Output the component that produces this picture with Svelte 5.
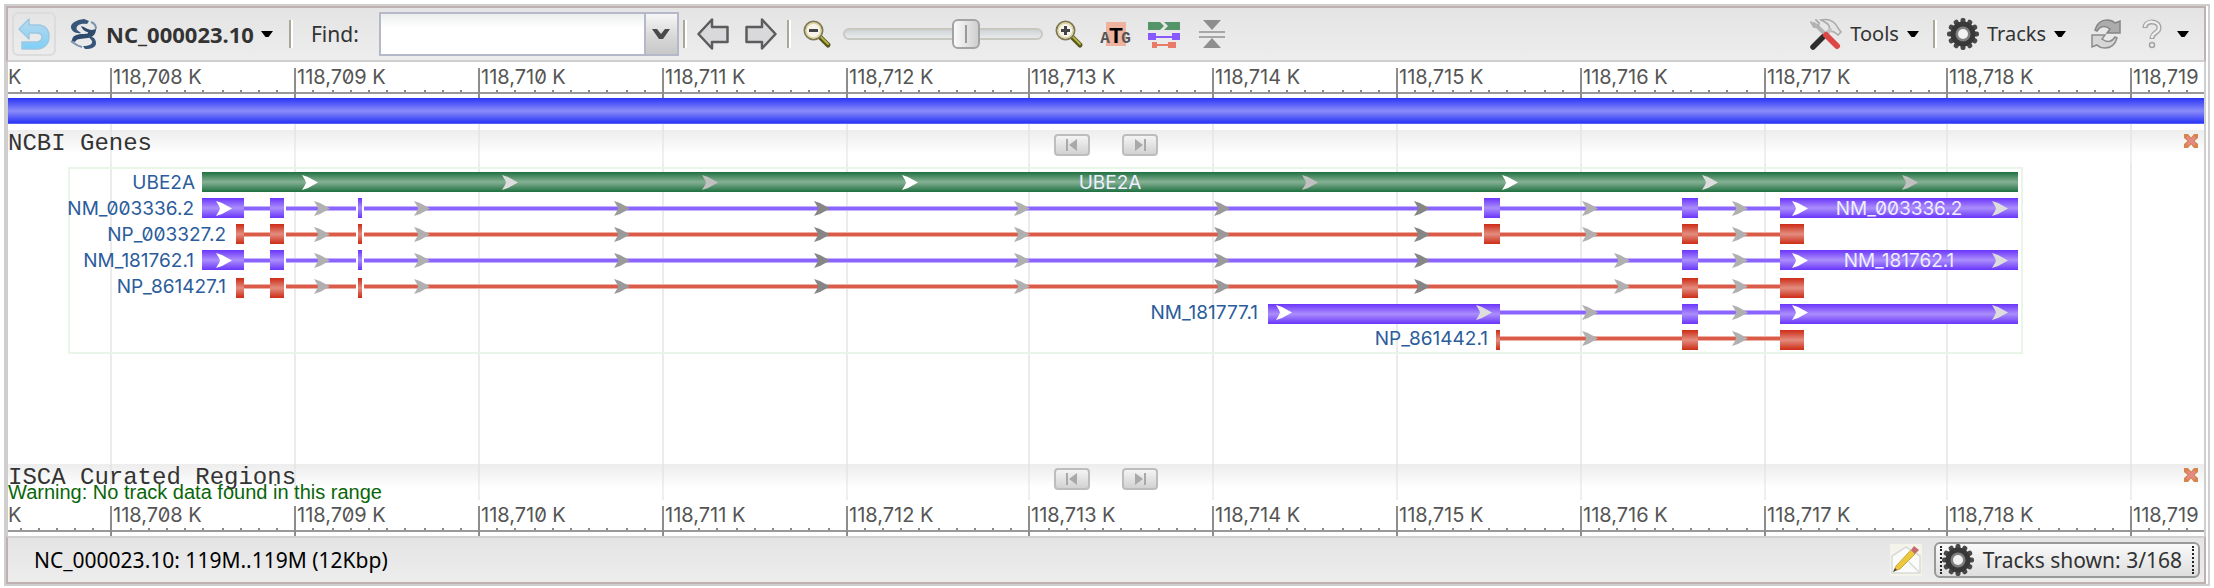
<script>
  let width = $state(2196);
  const k = $derived(width / 2196);

  const ticks = [102, 286, 470, 654, 838, 1020, 1204, 1388, 1572, 1756, 1938, 2122];
  const names = ticks.map((_, i) => (i === 11 ? '118,719' : `118,${708 + i} K`));
  const minor = [];
  for (let i = -1; i < 12; i++) {
    for (let j = 1; j < 10; j++) {
      const x = Math.round((103 + i * 183.6 + j * 18.36) / 2) * 2;
      if (x > 4 && x < 2196) minor.push(x);
    }
  }

  const W = '#ffffff', L = '#dddddd', M = '#c0c0c0';
  const G1 = '#b0b0b0', G2 = '#9a9a9a', G3 = '#868686';
  const common = [[306, G1], [406, G1], [606, G2], [806, G3], [1006, G1], [1206, G2], [1406, G3]];
  const longArrows = [...common, [1574, G1], [1724, G1]];
  const skipArrows = [...common, [1606, G1], [1724, G1]];
  const ends = [[208, W], [1784, W], [1984, L]];

  // Row pitch is 26; exon boxes of the lower rows sit slightly below their line.
  const rows = [
    { drop: 0, kind: 'gene', name: 'UBE2A', inner: 1102, at: 187, exons: [[194, 2010]], introns: [],
      arrows: [[294, W], [494, L], [694, M], [894, W], [1294, M], [1494, W], [1694, L], [1894, M]] },
    { drop: 0, kind: 'rna', name: 'NM_003336.2', inner: 1891, at: 186,
      exons: [[194, 236], [262, 276], [350, 354], [1476, 1492], [1674, 1690], [1772, 2010]],
      introns: [[236, 262], [278, 348], [356, 1474], [1492, 1674], [1690, 1772]], arrows: [...longArrows, ...ends] },
    { drop: 0, kind: 'cds', name: 'NP_003327.2', at: 218,
      exons: [[228, 236], [262, 276], [350, 354], [1476, 1492], [1674, 1690], [1772, 1796]],
      introns: [[236, 262], [278, 348], [356, 1474], [1492, 1674], [1690, 1772]], arrows: longArrows },
    { drop: 0, kind: 'rna', name: 'NM_181762.1', inner: 1891, at: 186,
      exons: [[194, 236], [262, 276], [350, 354], [1674, 1690], [1772, 2010]],
      introns: [[236, 262], [278, 348], [356, 1674], [1690, 1772]], arrows: [...skipArrows, ...ends] },
    { drop: 2, kind: 'cds', name: 'NP_861427.1', at: 218,
      exons: [[228, 236], [262, 276], [350, 354], [1674, 1690], [1772, 1796]],
      introns: [[236, 262], [278, 348], [356, 1674], [1690, 1772]], arrows: skipArrows },
    { drop: 2, kind: 'rna', name: 'NM_181777.1', at: 1250,
      exons: [[1260, 1492], [1674, 1690], [1772, 2010]],
      introns: [[1492, 1674], [1690, 1772]],
      arrows: [[1268, W], [1468, L], [1574, G1], [1724, G1], [1784, W], [1984, L]] },
    { drop: 2, kind: 'cds', name: 'NP_861442.1', at: 1480,
      exons: [[1488, 1492], [1674, 1690], [1772, 1796]],
      introns: [[1492, 1674], [1690, 1772]], arrows: [[1574, G1], [1724, G1]] }
  ];

  let query = $state('');
  let zoom = $state(64);
</script>

{#snippet ruler()}
  <svg class="ruler" aria-hidden="true">
    <text x="0" y="22">K</text>
    <rect x="0" y="30" width="100%" height="2" fill="#999" />
    {#each minor as x}<rect x={x * k} y="28" width="2" height="2" fill="#888" />{/each}
    {#each ticks as x, i}
      <rect x={x * k} y="6" width="2" height="30" fill="#8c8c8c" />
      <text x={x * k + 3} y="22">{names[i]}</text>
    {/each}
  </svg>
{/snippet}

{#snippet gear()}
  <svg class="icon" width="32" height="32" viewBox="0 0 32 32">
    <g fill="#484848">
      {#each [0, 30, 60, 90, 120, 150] as a}
        <rect x="13.500" y="0" width="5" height="32" rx="2" transform="rotate({a} 16 16)" />
      {/each}
    </g>
    <circle cx="16" cy="16" r="12.500" fill="#383838" />
    <circle cx="16" cy="16" r="7.500" fill="#808080" />
    <circle cx="16" cy="16" r="5" fill="#f2f2f2" />
  </svg>
{/snippet}

{#snippet caret()}
  <svg width="12" height="8" viewBox="0 0 12 8"><path d="M0 1H12L7.500 7H4.500Z" fill="#000" /></svg>
{/snippet}

{#snippet trackHead(title)}
  <div class="head">
    <h2>{title}</h2>
    <div class="nav">
      <button aria-label="Previous feature">
        <svg width="32" height="18" viewBox="0 0 32 18"><path d="M10 3h2v12h-2zM21 3v12l-8-6z" fill="#a9a9a9" /></svg>
      </button>
      <button aria-label="Next feature">
        <svg width="32" height="18" viewBox="0 0 32 18"><path d="M20 3h2v12h-2zM11 3v12l8-6z" fill="#a9a9a9" /></svg>
      </button>
    </div>
    <button class="close" aria-label="Close track">
      <svg width="14" height="14" viewBox="0 0 14 14"><path d="M0 0H4L7 3.500L10 0H14V4L10.500 7L14 10V14H10L7 10.500L4 14H0V10L3.500 7L0 4Z" fill="#d5844c" /><path d="M3 3L11 11M11 3L3 11" stroke="#e58a88" stroke-width="2.500" /></svg>
    </button>
  </div>
{/snippet}

{#snippet lens(plus)}
  <svg width="30" height="30" viewBox="0 0 30 30">
    <path d="M18 18L26 26" stroke="#55551c" stroke-width="5" stroke-linecap="round" />
    <path d="M19 18L26 25" stroke="#b5b240" stroke-width="2" stroke-linecap="round" />
    <circle cx="11.500" cy="11.500" r="9" fill="#f6f3ea" stroke="#7d7658" stroke-width="2" />
    <circle cx="11.500" cy="11.500" r="7.500" fill="none" stroke="#dcd49c" stroke-width="1.500" />
    <path d={plus ? 'M7 11.500h9M11.500 7v9' : 'M7 11.500h9'} stroke="#444" stroke-width="3" />
  </svg>
{/snippet}

<div class="viewer">
  <div class="toolbar">
    <button class="undo" aria-label="Back">
      <svg width="32" height="32" viewBox="0 0 32 32">
        <defs><linearGradient id="back" x1="0" y1="0" x2="0" y2="1"><stop offset="0" stop-color="#b9d9ee" /><stop offset="1" stop-color="#7fd0f8" /></linearGradient></defs>
        <path d="M1 11L11 1V7H20C27 7 31 12 31 18.500C31 26 26 31 19 31H4V24H18C21.500 24 24 22 24 18.500C24 16 21.500 15 18 15H11V21Z" fill="url(#back)" stroke="#9cc7e2" stroke-width="1.500" stroke-linejoin="round" />
      </svg>
    </button>
    <button class="seq">
      <svg width="32" height="32" viewBox="0 0 32 32">
        <path d="M17 1L22 3L20 6C13 5 8 8 10 12L14 15C9 16 4 13 4 9C4 5 9 2 17 1Z" fill="#36577a" />
        <path d="M14 8C18 9 21 12 25 12L29 11C29 15 27 19 21 20C15 21 10 20 8 24L5 23C5 18 9 16 16 16C20 16 23 15 20 14C17 13 15 11 14 8Z" fill="#2c4a6c" />
        <path d="M21 18C26 18 29 21 29 25C29 29 25 31 18 31L16 28C22 28 26 26 25 23Z" fill="#36577a" />
        <path d="M4 23C8 26 10 28 15 29M24 4C27 5 29 8 29 11" fill="none" stroke="#7d93aa" stroke-width="2" />
      </svg>
      <b>NC_000023.10</b>{@render caret()}
    </button>
    <i class="sep"></i>
    <label class="find" for="find">Find:</label>
    <div class="combo">
      <input id="find" type="text" bind:value={query} />
      <button aria-label="Show searches">
        <svg width="18" height="12" viewBox="0 0 18 12"><path d="M0 1H5L9 6L13 1H18L11 11H7Z" fill="#4a4a4a" /></svg>
      </button>
    </div>
    <i class="sep"></i>
    <div class="group arrows">
      {#each [1, -1] as d}
        <button aria-label={d > 0 ? 'Pan left' : 'Pan right'}>
          <svg width="32" height="32" viewBox="0 0 32 32"><path transform={d > 0 ? '' : 'translate(32 0) scale(-1 1)'} d="M1.500 16L15 1.500V9H30.500V24H15V30.500Z" fill="#d9d8db" stroke="#5c5c5e" stroke-width="2.500" stroke-linejoin="round" /></svg>
        </button>
      {/each}
    </div>
    <i class="sep"></i>
    <div class="group zoomer">
      <button aria-label="Zoom out">{@render lens(false)}</button>
      <input type="range" min="0" max="100" aria-label="Zoom" bind:value={zoom} />
      <button aria-label="Zoom in">{@render lens(true)}</button>
    </div>
    <div class="group views">
      <button aria-label="Zoom to sequence">
        <svg width="32" height="32" viewBox="0 0 32 32">
          <rect x="6" y="4" width="20" height="24" fill="#eeb29e" />
          <g class="atg"><text x="5" y="25">A</text><text x="26" y="25">G</text><text class="t" x="16" y="25">T</text></g>
        </svg>
      </button>
      <button aria-label="Gene models">
        <svg width="32" height="32" viewBox="0 0 32 32">
          <path d="M0 4H12L16 8L12 12H0ZM16 4H32V12H16L20 8Z" fill="#559468" />
          <path d="M0 15H8V22H0ZM24 15H32V22H24ZM8 18H24V20H8Z" fill="#8757ff" />
          <path d="M4 24H9V30H4ZM20 24H28V30H20ZM9 26H20V28H9Z" fill="#ea7b66" />
        </svg>
      </button>
      <button aria-label="Collapse">
        <svg width="32" height="32" viewBox="0 0 32 32"><path d="M7 2H25L16 12ZM7 30H25L16 20Z" fill="#8e8e8e" /><path d="M3 13H29V15H3ZM3 18H29V20H3Z" fill="#a6a6a6" /></svg>
      </button>
    </div>
    <div class="right">
      <button class="menu">
        <svg width="32" height="32" viewBox="0 0 32 32" stroke-linecap="round" fill="none">
          <path d="M4 6L8 9L17 18" stroke="#b4b4b4" stroke-width="4" />
          <path d="M1 4L4 9L8 9L9 5L6 2" stroke="#b0b0b0" stroke-width="2" />
          <path d="M11 2C20 0 25 4 28 10L31 14L28 17L24 14L19 13C21 7 17 5 11 2Z" fill="#e4e4e4" stroke="#aaa" stroke-width="1.500" />
          <path d="M20 12L15 17" stroke="#c4c4c4" stroke-width="4" />
          <path d="M13 19L3 29" stroke="#2e2e2e" stroke-width="5.500" />
          <path d="M16 17L27 28" stroke="#dc4646" stroke-width="6" />
        </svg>
        Tools{@render caret()}
      </button>
      <i class="sep"></i>
      <button class="menu">{@render gear()}Tracks{@render caret()}</button>
      <button class="reload" aria-label="Reload">
        <svg width="32" height="32" viewBox="0 0 32 32">
          <path d="M5 12C7 5 11 2 17 2C21 2 23 3 25 5L30 3V15H17L20 11C15 7 10 8 7 13Z" fill="#acacac" stroke="#858585" stroke-width="1.500" />
          <path d="M27 20C25 27 21 30 15 30C11 30 9 29 7 27L2 29V17H15L12 21C17 25 22 24 25 19Z" fill="#d6d6d6" stroke="#8c8c8c" stroke-width="1.500" />
        </svg>
      </button>
      <button class="help" aria-label="Help">
        <svg width="20" height="30" viewBox="0 0 20 30" fill="none"><path d="M3 9C3 1 17 1 17 9C17 14 10 13 10 20" stroke="#a2a2a2" stroke-width="5" /><path d="M3 8C3 1 17 1 17 9C17 14 10 13 10 19" stroke="#ededed" stroke-width="2.500" /><circle cx="10" cy="26" r="2.500" fill="#eee" stroke="#a2a2a2" stroke-width="1.500" /></svg>
        {@render caret()}
      </button>
    </div>
  </div>

  <div class="canvas" bind:clientWidth={width}>
    {@render ruler()}
    <div class="sequence"></div>
    <div class="tracks">
      <svg class="grid" aria-hidden="true">
        {#each ticks as x}<rect x={x * k} y="0" width="2" height="100%" />{/each}
      </svg>
      <section class="genes">
        {@render trackHead('NCBI Genes')}
        <svg class="models" role="img" aria-label="Gene models">
          <defs>
            {#each [['gene', '#1f7040', '#86b194'], ['rna', '#6a35fb', '#ab8efc'], ['cds', '#cd2b14', '#e38d80']] as [id, edge, mid]}
              <linearGradient {id} x1="0" y1="0" x2="0" y2="1">
                <stop offset="0" stop-color={edge} /><stop offset=".5" stop-color={mid} /><stop offset="1" stop-color={edge} />
              </linearGradient>
            {/each}
          </defs>
          <rect x={61 * k} y="4" width={1953 * k} height="185" fill="none" stroke="#e9f5e9" stroke-width="2" />
          {#each rows as r, i}
            <g transform="translate(0 {8 + i * 26})">
              {#each r.introns as [a, b]}
                <rect x={a * k} y="8" width={(b - a) * k} height="5" fill={r.kind === 'rna' ? '#c3b0ff' : '#eeb0a5'} />
                <rect x={a * k} y="9" width={(b - a) * k} height="3" fill={r.kind === 'rna' ? '#8b63ff' : '#da5c48'} />
              {/each}
              {#each r.exons as [a, b]}
                <rect x={a * k} y={r.drop} width={(b - a) * k} height="20" fill="url(#{r.kind})" />
              {/each}
              {#each r.arrows as [x, c]}
                <path transform="translate({x * k} 3)" d="M0 0L6 2L16 7.500L6 13L0 15L3 10L4 7.500L3 5Z" fill={c} />
              {/each}
              <text x={r.at * k} y="17" text-anchor="end" fill="#2b5c9b">{r.name}</text>
              {#if r.inner}<text x={r.inner * k} y="17" text-anchor="middle" fill="#eef">{r.name}</text>{/if}
            </g>
          {/each}
        </svg>
      </section>
      <section class="isca">
        {@render trackHead('ISCA Curated Regions')}
        <p>Warning: No track data found in this range</p>
      </section>
    </div>
    {@render ruler()}
  </div>

  <div class="status">
    <span>NC_000023.10: 119M..119M (12Kbp)</span>
    <div class="right">
      <button aria-label="Edit markers">
        <svg width="32" height="32" viewBox="0 0 32 32">
          <rect width="32" height="32" fill="#f4f4ea" /><path d="M2 12L16 3L30 12V29H2Z" fill="#fbfbfb" stroke="#d8dcd8" stroke-width="1.500" /><path d="M2 29L13 18M30 29L19 18" stroke="#d8dcd8" stroke-width="1.500" />
          <path d="M6 22L21 6L25 10L10 25L4 27Z" fill="#ecc83c" stroke="#c9a93c" /><path d="M21 6L24 2L29 6L25 10Z" fill="#c86a74" /><path d="M3 28L5 24L7 26Z" fill="#444" />
        </svg>
      </button>
      <button class="shown"><span>{@render gear()}Tracks shown: 3/168</span></button>
    </div>
  </div>
</div>

<style>
  :global(body) { background: #fff; }
  .viewer {
    margin: 4px 4px 2px;
    border: 2px solid #cfcfcf;
    padding-right: 2px;
    font: 21px/28px "Noto Sans", "Open Sans", sans-serif;
    color: #333;
  }
  button { border: 0; background: none; padding: 0; margin: 0; font: inherit; color: inherit; display: flex; align-items: center; }
  svg { display: block; flex: none; }
  .toolbar, .status {
    display: flex;
    align-items: center;
    box-sizing: border-box;
    border: 2px solid #bfb1b1;
    background: linear-gradient(#e4e4e4, #ededed);
  }
  .toolbar { height: 56px; border-bottom-color: #cfcfcf; padding: 0 15px 0 4px; }
  .sep { width: 2px; height: 28px; background: #aca899; border-right: 2px solid #fff; flex: none; }
  .undo { width: 44px; height: 44px; box-sizing: border-box; border: 2px solid #dcdcdc; border-radius: 6px; justify-content: center; }
  .seq { margin: 0 16px 0 11px; gap: 7px; font-size: 22px; }
  .find { margin: 0 20px 0 18px; }
  .combo { display: flex; width: 300px; height: 44px; margin-right: 4px; border: 2px solid #b5b8c8; box-sizing: border-box; }
  .combo input { flex: 1; min-width: 0; border: 0; padding: 0 8px; font: inherit; outline: 0; background: linear-gradient(#eceeee, #fff 14px); }
  .combo button { width: 33px; justify-content: center; border-left: 2px solid #b5b8c8; background: linear-gradient(#f6f6f6, #d6d6d6 60%, #c8c8c8); }
  .group { display: flex; align-items: center; }
  .arrows { gap: 16px; margin: 0 10px; }
  .zoomer { gap: 11px; margin-left: 11px; }
  .zoomer input { appearance: none; width: 200px; height: 30px; margin: 0; background: none; }
  .zoomer input::-webkit-slider-runnable-track { height: 12px; box-sizing: border-box; border: 2px solid #c9c8c0; border-radius: 6px; background: linear-gradient(#cfd4d6, #e8ebec); }
  .zoomer input::-webkit-slider-thumb { appearance: none; width: 28px; height: 30px; margin-top: -11px; box-sizing: border-box; border: 2px solid #a3a3a3; border-radius: 6px; background: linear-gradient(90deg, transparent 11px, #999 11px 13px, transparent 13px) 0 4px / 100% 18px no-repeat, linear-gradient(90deg, #fafafa, #cfcfcf); }
  .views { gap: 16px; margin-left: 16px; }
  .right { display: flex; align-items: center; margin-left: auto; }
  .menu { gap: 8px; font-size: 20px; }
  .toolbar .right .sep { margin: 0 10px 0 14px; }
  .reload { margin-left: 24px; }
  .help { gap: 15px; margin-left: 20px; }

  .canvas { border-left: 2px solid #cfcfcf; border-right: 2px solid #cfcfcf; background: #fff; }
  .ruler { width: 100%; height: 36px; overflow: hidden; }
  .ruler text, .models text { font-family: Inter, "Liberation Sans", sans-serif; font-feature-settings: "zero"; }
  .ruler text { font-size: 20px; fill: #555; }
  .models text { font-size: 19px; }
  .atg { font: 700 16px "Liberation Mono", monospace; fill: #555; text-anchor: middle; }
  .atg .t { font: 700 22px "Liberation Sans", sans-serif; fill: #000; }
  .sequence { height: 26px; background: linear-gradient(#2a35f6, #8b8cf9 50%, #2a35f6 96%, #8b8cf9); }
  .tracks { display: grid; padding-top: 6px; }
  .grid { grid-area: 1 / 1 / 3 / 2; width: 100%; height: calc(100% + 6px); margin-top: -6px; fill: #ebebeb; }
  .genes { grid-area: 1 / 1; height: 334px; }
  .isca { grid-area: 2 / 1; height: 36px; }
  .head { display: grid; grid-template-columns: 1fr auto 1fr; align-items: start; height: 34px; background: linear-gradient(rgba(225, 225, 225, .6), rgba(255, 255, 255, .2) 24px); }
  .models { width: 100%; height: 200px; }
  h2 { margin: 0; font: 24px/28px "Liberation Mono", monospace; color: #333; }
  .nav { display: flex; gap: 32px; padding-top: 4px; }
  .nav button { width: 36px; height: 22px; box-sizing: border-box; border: 2px solid #bdbdbd; border-radius: 4px; background: linear-gradient(#f4f4f4, #d2d2d2); }
  .close { justify-self: end; margin: 4px 6px 0 0; }
  p { margin: -18px 0 0; font: 20px/24px "Liberation Sans", sans-serif; color: #096609; }

  .status { height: 48px; border-top-color: #cfcfcf; padding: 0 4px 0 26px; color: #000; }
  .status .right { gap: 12px; }
  .shown { height: 36px; box-sizing: border-box; border: 2px solid #999; border-radius: 6px; padding: 2px 4px; background: linear-gradient(#fafafa, #dedede); color: #333; }
  .shown span { display: flex; align-items: center; gap: 9px; height: 28px; border: 2px dotted #222; border-width: 0 2px; padding-right: 10px; }
</style>
